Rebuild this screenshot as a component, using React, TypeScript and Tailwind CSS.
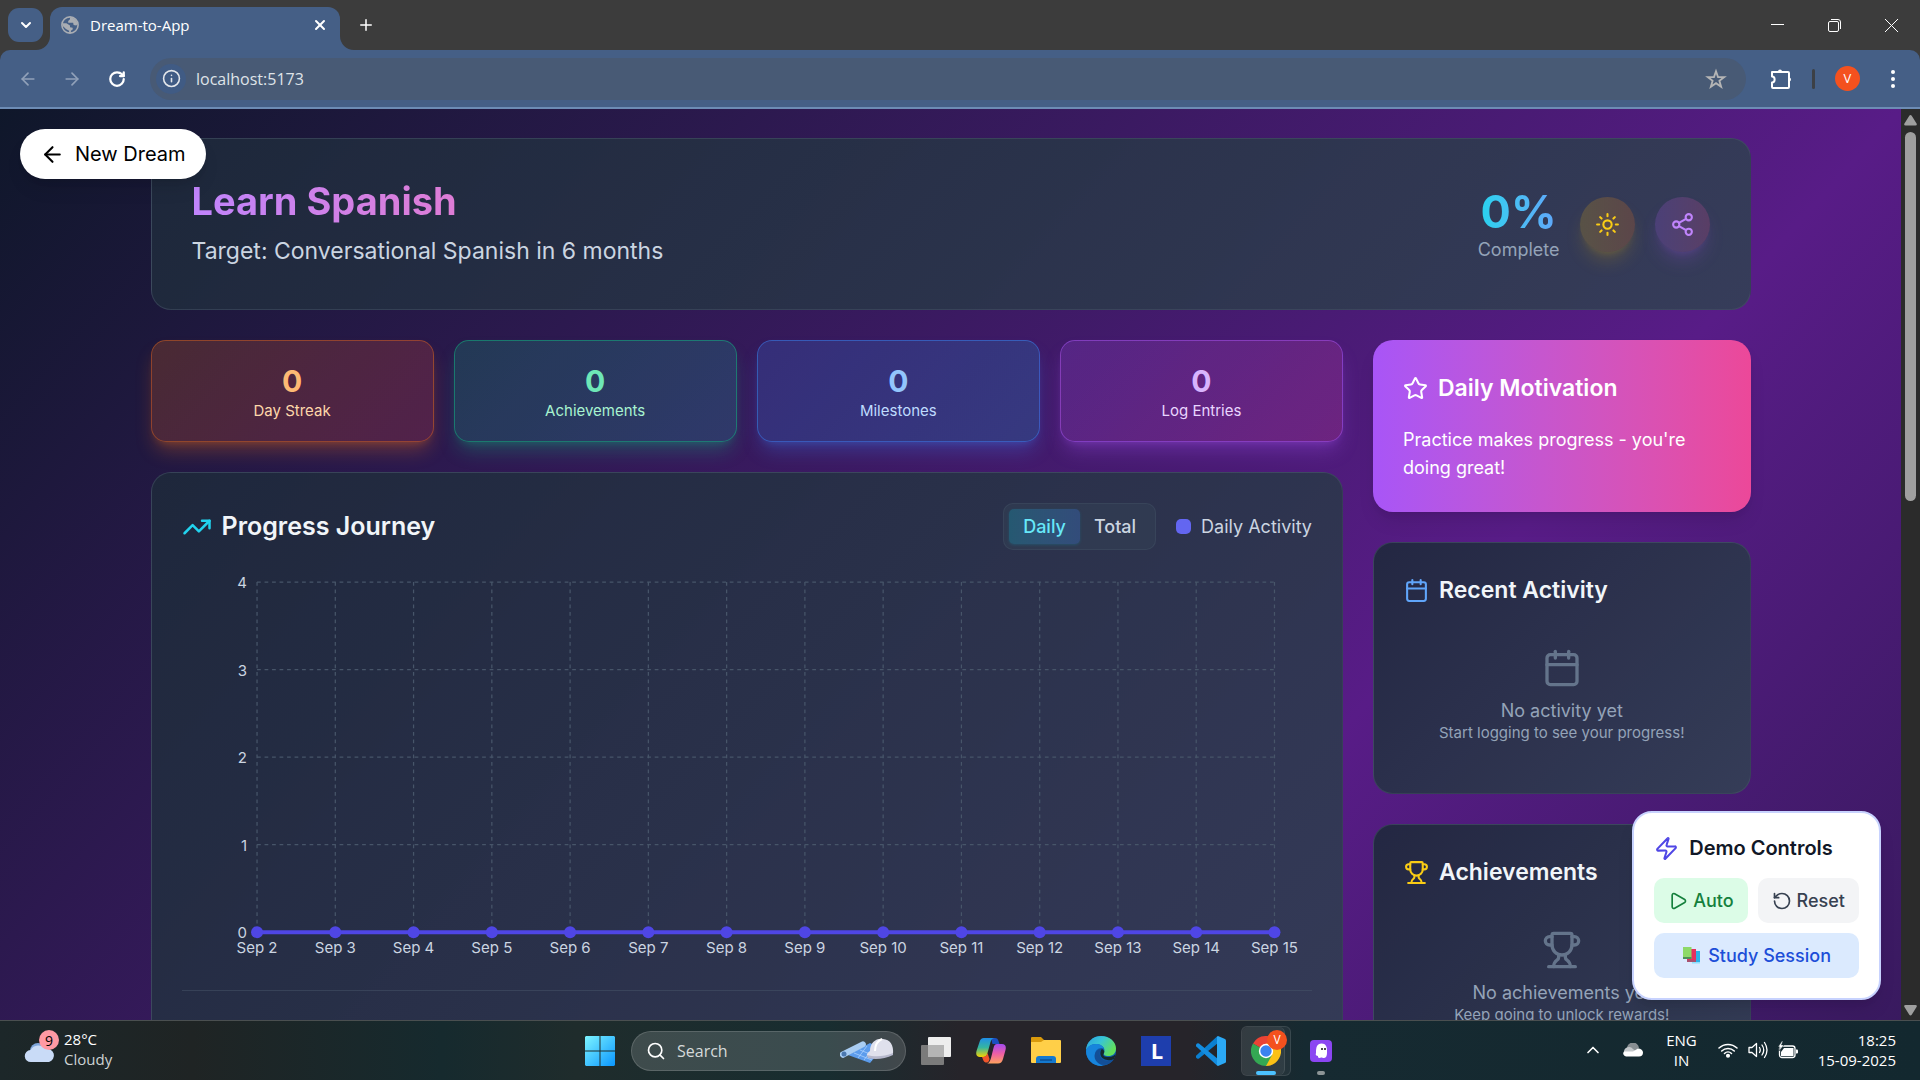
import React, { useState } from 'react';
import {
  ArrowLeft,
  ArrowRight,
  Calendar,
  ChevronDown,
  ChevronUp,
  Info,
  Play,
  Plus,
  RotateCcw,
  RotateCw,
  Search,
  Share2,
  Star,
  Sun,
  TrendingUp,
  Trophy,
  X,
  Zap,
} from 'lucide-react';

const stats = [
  {
    label: 'Day Streak',
    value: 0,
    card: 'bg-[linear-gradient(135deg,#f9731633,#ef444433)] border-[#f97316]/40 shadow-[0_12px_19px_-4px_#f973164d,0_5px_8px_-5px_#f973164d]',
    valueColor: 'text-[#fdba74]',
    labelColor: 'text-[#fed7aa]',
  },
  {
    label: 'Achievements',
    value: 0,
    card: 'bg-[linear-gradient(135deg,#10b98133,#14b8a633)] border-[#10b981]/50 shadow-[0_12px_19px_-4px_#10b9814d,0_5px_8px_-5px_#10b9814d]',
    valueColor: 'text-[#6ee7b7]',
    labelColor: 'text-[#a7f3d0]',
  },
  {
    label: 'Milestones',
    value: 0,
    card: 'bg-[linear-gradient(135deg,#3b82f633,#06b6d433)] border-[#3b82f6]/50 shadow-[0_12px_19px_-4px_#3b82f64d,0_5px_8px_-5px_#3b82f64d]',
    valueColor: 'text-[#93c5fd]',
    labelColor: 'text-[#bfdbfe]',
  },
  {
    label: 'Log Entries',
    value: 0,
    card: 'bg-[linear-gradient(135deg,#a855f733,#ec489933)] border-[#a855f7]/50 shadow-[0_12px_19px_-4px_#a855f74d,0_5px_8px_-5px_#a855f74d]',
    valueColor: 'text-[#d8b4fe]',
    labelColor: 'text-[#e9d5ff]',
  },
];

const days = Array.from({ length: 14 }, (_, i) => `Sep ${i + 2}`);

const cardStyle = 'bg-[linear-gradient(135deg,#1e293be6,#334155e6)] border border-[#475569]/50';

const TabStrip = () => (
  <div className="flex h-[50px] items-end bg-[#3c3c3c] pl-2 font-['Open_Sans',sans-serif]">
    <button aria-label="Search tabs" className="mb-2 flex h-[34px] w-[35px] items-center justify-center rounded-[11px] bg-[#455f86] text-white">
      <ChevronDown size={16} strokeWidth={3} />
    </button>
    <div className="relative ml-[7px] flex h-[43px] w-[290px] items-center rounded-t-xl bg-[#455f86] pr-3 pb-[7px] pl-[11px] text-white">
      <svg viewBox="0 0 14 14" className="absolute bottom-0 -left-[14px] h-[14px] w-[14px]" fill="#455f86">
        <path d="M14 0v14H0A14 14 0 0 0 14 0z" />
      </svg>
      <svg viewBox="0 0 14 14" className="absolute -right-[14px] bottom-0 h-[14px] w-[14px]" fill="#455f86">
        <path d="M0 0v14h14A14 14 0 0 1 0 0z" />
      </svg>
      <svg viewBox="0 0 20 20" className="h-[18px] w-[18px]">
        <circle cx="10" cy="10" r="9" fill="#455f86" stroke="#a9adb3" strokeWidth="1.800" />
        <path d="M1.500 8h4.500l4 2.500v2l3 .5v2l-2 1.500v2.500H9v-2.500l-3.500-2L2 11zM10 1.500v2L8 5.500v2h5.500l.5 2.500 3 .5 1.500-1.500C18 5 15 2 10 1.500z" fill="#a9adb3" />
      </svg>
      <span className="ml-[11px] flex-1 text-[15px] leading-5">Dream-to-App</span>
      <button aria-label="Close tab">
        <X size={16} strokeWidth={3} />
      </button>
    </div>
    <button aria-label="New tab" className="mb-[16px] ml-[17px] text-white">
      <Plus size={18} strokeWidth={2} />
    </button>
    <div className="mb-[18px] ml-auto flex items-center gap-11 pr-[22px] text-white">
      <button aria-label="Minimize">
        <svg width="13" height="13" viewBox="0 0 13 13" stroke="currentColor"><path d="M0 5.500h13" /></svg>
      </button>
      <button aria-label="Restore">
        <svg width="13" height="13" viewBox="0 0 13 13" fill="none" stroke="currentColor">
          <rect x=".5" y="2.500" width="10" height="10" rx="1.500" />
          <path d="M3 .5h7a2.500 2.500 0 0 1 2.500 2.500v7" />
        </svg>
      </button>
      <button aria-label="Close">
        <svg width="13" height="13" viewBox="0 0 13 13" stroke="currentColor"><path d="M0 0l13 13M13 0L0 13" /></svg>
      </button>
    </div>
  </div>
);

const Toolbar = () => (
  <div className="bg-[#3c3c3c] font-['Open_Sans',sans-serif]">
    <div className="flex h-[59px] items-center rounded-t-[10px] border-b-2 border-[#6d8cb5] bg-[#455f86] pl-[18px]">
      <button aria-label="Back" className="text-[#91a1b9]"><ArrowLeft size={20} /></button>
      <button aria-label="Forward" className="ml-[24px] text-[#91a1b9]"><ArrowRight size={20} /></button>
      <button aria-label="Reload" className="ml-[26px] text-white">
        <RotateCw size={18} strokeWidth={3} />
      </button>
      <div className="ml-[24px] flex h-[42px] flex-1 items-center rounded-full bg-[#485a75] pr-[19px] pl-[6px]">
        <button aria-label="View site information" className="flex h-[30px] w-[30px] items-center justify-center rounded-full bg-[#405b84] text-[#e3e6ea]">
          <Info size={19} />
        </button>
        <input
          aria-label="Address"
          defaultValue="localhost:5173"
          className="ml-[10px] min-w-0 flex-1 bg-transparent text-[16px] text-[#dfe3e8] outline-none"
        />
        <button aria-label="Bookmark this tab">
          <svg width="22" height="22" viewBox="0 0 24 24" fill="none" stroke="#b5b5b5" strokeWidth="2">
            <path d="M12 3.500l2.200 6.300 6.800.1-5.300 4.100 1.900 6.500-5.600-3.900-5.600 3.900 1.900-6.500L3 9.900l6.800-.1z" />
          </svg>
        </button>
      </div>
      <button aria-label="Extensions" className="ml-[24px]">
        <svg width="22" height="22" viewBox="0 0 22 22" fill="none" stroke="#fff" strokeWidth="2" strokeLinejoin="round">
          <path d="M2 4h16a1 1 0 0 1 1 1v14a1 1 0 0 1-1 1H3a1 1 0 0 1-1-1v-4.500c3.500 0 3.500-6 0-6z" />
          <path d="M8 3.500a2 2 0 0 1 4 0zM19 9.500a2 2 0 0 1 0 4z" fill="#fff" stroke="none" />
        </svg>
      </button>
      <span className="ml-5 h-5 w-[3px] rounded-full bg-[#3c4046]" />
      <button className="ml-5 flex h-[25px] w-[25px] items-center justify-center rounded-full bg-[#f4511e] text-[13px] text-white">V</button>
      <button aria-label="Menu" className="mr-[19px] ml-[25px]">
        <svg width="16" height="20" viewBox="0 0 16 20" fill="#fff">
          <circle cx="8" cy="3" r="2" />
          <circle cx="8" cy="10" r="2" />
          <circle cx="8" cy="17" r="2" />
        </svg>
      </button>
    </div>
  </div>
);

const DreamHeader = () => (
  <header className={`flex items-center justify-between rounded-[20px] p-10 ${cardStyle}`}>
    <div>
      <h1 className="bg-linear-to-r from-[#c084fc] to-[#f472b6] bg-clip-text text-[38px] leading-[45px] font-bold text-transparent">
        Learn Spanish
      </h1>
      <p className="mt-[10px] text-[23px] leading-[35px] text-[#cbd5e1]">Target: Conversational Spanish in 6 months</p>
    </div>
    <div className="flex items-center gap-5">
      <div className="text-center">
        <div className="bg-linear-to-r from-[#22d3ee] to-[#60a5fa] bg-clip-text text-[45px] leading-[50px] font-bold text-transparent">0%</div>
        <div className="text-[18px] leading-[25px] text-[#94a3b8]">Complete</div>
      </div>
      <button
        aria-label="Toggle theme"
        className="rounded-full bg-linear-to-r from-[#eab308]/20 to-[#f97316]/20 p-[15px] text-[#facc15] shadow-[0_12px_19px_-4px_#eab30833,0_5px_8px_-5px_#eab30833]"
      >
        <Sun size={25} />
      </button>
      <button
        aria-label="Share"
        className="rounded-full bg-linear-to-r from-[#a855f7]/20 to-[#ec4899]/20 p-[15px] text-[#c084fc] shadow-[0_12px_19px_-4px_#a855f733,0_5px_8px_-5px_#a855f733]"
      >
        <Share2 size={25} />
      </button>
    </div>
  </header>
);

const ProgressChart = () => {
  const left = 75;
  const right = 1092;
  const top = 7;
  const bottom = 357;
  const step = (right - left) / (days.length - 1);
  const xs = days.map((_, i) => left + step * i);

  return (
    <svg viewBox="0 0 1130 400" className="w-full" role="img" aria-label="Daily activity chart">
      <g stroke="#475569" strokeWidth="1.250" strokeDasharray="3.750 3.750">
        {[0, 1, 2, 3, 4].map((v) => {
          const y = bottom - ((bottom - top) / 4) * v;
          return <line key={v} x1={left} x2={right} y1={y} y2={y} />;
        })}
        {xs.map((x) => (
          <line key={x} x1={x} x2={x} y1={top} y2={bottom} />
        ))}
      </g>
      <line x1={left} x2={right} y1={bottom} y2={bottom} stroke="#4f46e5" strokeWidth="4" />
      {xs.map((x) => (
        <circle key={x} cx={x} cy={bottom} r="6" fill="#4f46e5" />
      ))}
      <g fill="#cbd5e1" fontSize="15">
        {[0, 1, 2, 3, 4].map((v) => (
          <text key={v} x={left - 10} y={bottom + 6 - ((bottom - top) / 4) * v} textAnchor="end">{v}</text>
        ))}
        {days.map((day, i) => (
          <text key={day} x={xs[i]} y={bottom + 21} textAnchor="middle">{day}</text>
        ))}
      </g>
    </svg>
  );
};

const ProgressJourney = () => {
  const [mode, setMode] = useState('Daily');

  return (
    <section className={`rounded-[20px] p-[30px] ${cardStyle}`}>
      <div className="mb-[25px] flex items-center justify-between">
        <h2 className="flex items-center gap-[10px] text-[25px] leading-[35px] font-semibold text-[#f1f5f9]">
          <TrendingUp size={30} className="text-[#22d3ee]" />
          Progress Journey
        </h2>
        <div className="flex items-center gap-5">
          <div className="flex rounded-[10px] border border-[#475569]/40 bg-[#334155]/50 p-[5px]">
            {['Daily', 'Total'].map((name) => (
              <button
                key={name}
                onClick={() => setMode(name)}
                className={`rounded-[5px] px-[14px] py-[5px] text-[18px] leading-[25px] font-medium ${
                  mode === name
                    ? 'bg-linear-to-r from-[#06b6d4]/25 to-[#3b82f6]/25 text-[#67e8f9] shadow-[0_1px_3px_#06b6d433]'
                    : 'text-[#cbd5e1]'
                }`}
              >
                {name}
              </button>
            ))}
          </div>
          <div className="flex items-center gap-[10px]">
            <span className="h-[15px] w-[15px] rounded-[5px] bg-[#6366f1]" />
            <span className="text-[18px] leading-[25px] text-[#cbd5e1]">{mode} Activity</span>
          </div>
        </div>
      </div>
      <ProgressChart />
      <div className="mt-[15px] h-[200px] border-t border-[#475569]/50" />
    </section>
  );
};

interface EmptyPanelProps {
  title: string;
  icon: React.ElementType;
  iconColor: string;
  message: string;
  hint: string;
}

const EmptyPanel: React.FC<EmptyPanelProps> = ({ title, icon: Icon, iconColor, message, hint }) => (
  <section className={`rounded-[20px] p-[30px] ${cardStyle}`}>
    <h3 className="mb-5 flex items-center gap-[10px] text-[23px] leading-[35px] font-semibold text-[#f1f5f9]">
      <Icon size={25} className={iconColor} />
      {title}
    </h3>
    <div className="flex flex-col items-center py-5">
      <Icon size={40} className="mb-[10px] text-[#64748b]" />
      <p className="text-[18px] leading-[25px] text-[#94a3b8]">{message}</p>
      <p className="text-[15px] leading-5 text-[#94a3b8]">{hint}</p>
    </div>
  </section>
);

const DemoControls = () => (
  <div className="absolute right-5 bottom-5 rounded-[20px] border-2 border-[#c7d2fe] bg-white p-5 shadow-[0_12px_19px_-4px_#0000001a,0_5px_8px_-5px_#0000001a]">
    <h4 className="mb-[15px] flex items-center gap-[10px] text-[20px] leading-[30px] font-semibold text-[#111827]">
      <Zap size={25} className="text-[#4f46e5]" />
      Demo Controls
    </h4>
    <div className="flex flex-col gap-[10px] text-[18px] leading-[25px] font-medium">
      <div className="flex gap-[10px]">
        <button className="flex items-center gap-[5px] rounded-[10px] bg-[#dcfce7] px-[14px] py-[10px] text-[#15803d]">
          <Play size={20} />
          Auto
        </button>
        <button className="flex items-center gap-[5px] rounded-[10px] bg-[#f3f4f6] px-[14px] py-[10px] text-[#374151]">
          <RotateCcw size={20} />
          Reset
        </button>
      </div>
      <button className="flex items-center justify-center gap-[7px] rounded-[10px] bg-[#dbeafe] px-[14px] py-[10px] text-[#1d4ed8]">
        <svg width="19" height="19" viewBox="0 0 19 19">
          <path d="M10 5h8v12h-8z" fill="#2cb1e8" />
          <path d="M10 16h8v1.500h-8z" fill="#8fe0ff" />
          <path d="M5 3h9v13H5z" fill="#e5305f" />
          <path d="M5 14h9v2H5z" fill="#a8516f" />
          <path d="M1 1h8.500v12H1z" fill="#8ed968" />
          <path d="M1 11h8.500v2H1z" fill="#4f8f5a" />
        </svg>
        Study Session
      </button>
    </div>
  </div>
);

const Dashboard = () => (
  <main className="relative min-h-0 min-w-0 flex-1 overflow-hidden bg-[linear-gradient(to_bottom_right,#0f172a,#581c87,#0f172a)] bg-[length:100%_232%] font-['Inter',sans-serif]">
    <div className="mx-auto flex max-w-[1600px] flex-col gap-[30px] pt-[29px]">
      <DreamHeader />
      <div className="grid grid-cols-4 items-start gap-[30px]">
        <div className="col-span-3 flex flex-col gap-[30px]">
          <div className="grid grid-cols-4 gap-5">
            {stats.map((stat) => (
              <div key={stat.label} className={`rounded-[15px] border p-5 text-center ${stat.card}`}>
                <div className={`text-[30px] leading-10 font-bold ${stat.valueColor}`}>{stat.value}</div>
                <div className={`text-[15px] leading-5 ${stat.labelColor}`}>{stat.label}</div>
              </div>
            ))}
          </div>
          <ProgressJourney />
        </div>
        <aside className="flex flex-col gap-[30px]">
          <section className="rounded-[20px] bg-linear-to-r from-[#a855f7] to-[#ec4899] p-[30px] text-white shadow-[0_12px_19px_-4px_#0000001a,0_5px_8px_-5px_#0000001a]">
            <h3 className="mb-5 flex items-center gap-[10px] text-[23px] leading-[36px] font-semibold">
              <Star size={25} />
              Daily Motivation
            </h3>
            <p className="text-[18px] leading-7">Practice makes progress - you're doing great!</p>
          </section>
          <EmptyPanel
            title="Recent Activity"
            icon={Calendar}
            iconColor="text-[#60a5fa]"
            message="No activity yet"
            hint="Start logging to see your progress!"
          />
          <EmptyPanel
            title="Achievements"
            icon={Trophy}
            iconColor="text-[#facc15]"
            message="No achievements yet"
            hint="Keep going to unlock rewards!"
          />
        </aside>
      </div>
    </div>
    <button className="absolute top-5 left-5 flex items-center gap-[10px] rounded-full bg-white px-5 py-[10px] text-[20px] leading-[30px] text-black shadow-[0_12px_19px_-4px_#0000001a,0_5px_8px_-5px_#0000001a]">
      <ArrowLeft size={25} />
      New Dream
    </button>
    <DemoControls />
  </main>
);

const Scrollbar = () => (
  <div className="flex w-[19px] flex-col items-center bg-[#2b2b2b] pt-[6px] pb-[4px]">
    <svg width="13" height="11" viewBox="0 0 13 11" fill="#9f9f9f"><path d="M6.500 0q.7 0 1.200.8l5 8q.5 1.700-1.200 1.700h-10q-1.700 0-1.200-1.700l5-8Q5.800 0 6.500 0z" /></svg>
    <div className="mt-[6px] h-[41%] w-[11px] rounded-full bg-[#9f9f9f]" />
    <svg width="13" height="11" viewBox="0 0 13 11" fill="#9f9f9f" className="mt-auto"><path d="M6.500 10.500q-.7 0-1.200-.8l-5-8Q-.2 0 1.500 0h10q1.700 0 1.200 1.700l-5 8q-.5.8-1.200.8z" /></svg>
  </div>
);

const Taskbar = () => (
  <footer className="relative flex h-[60px] items-center justify-between border-t border-[#4a4f50] bg-[linear-gradient(to_right,#1c2729_0%,#1f2424_10%,#162a2e_23%,#1f2c2c_30%,#182d30_43%,#26242a_50%,#26242a_62%,#162a31_68%,#13282f_100%)] font-['Open_Sans',sans-serif] text-white">
    <button className="flex items-center pb-[3px] pl-6 text-left">
      <span className="relative">
        <svg width="33" height="30" viewBox="0 0 33 30">
          <circle cx="14" cy="17" r="8" fill="#7fa6dc" />
          <path d="M7 28a6 6 0 0 1-.5-12 9 9 0 0 1 15-1A6.500 6.500 0 0 1 25 28z" fill="#c9dbf7" />
        </svg>
        <span className="absolute -top-1 -right-[2px] flex h-5 w-5 items-center justify-center rounded-full bg-[#ff99a4] text-[14px] text-black">9</span>
      </span>
      <span className="ml-[7px] text-[15px] leading-5">
        <span className="block">28°C</span>
        <span className="block text-[#cdd2d3]">Cloudy</span>
      </span>
    </button>

    <nav className="absolute inset-y-0 left-[585px] flex items-center">
      <button aria-label="Start">
        <svg width="30" height="30" viewBox="0 0 30 30">
          <defs>
            <linearGradient id="win" x1="0" y1="0" x2="1" y2="1">
              <stop offset="0" stopColor="#7df4ff" />
              <stop offset="1" stopColor="#0a96ff" />
            </linearGradient>
          </defs>
          <path d="M1 0h13.500v14.500H0V1zM15.500 0H29l1 1v13.500H15.500zM0 15.500h14.500V30H1l-1-1zM15.500 15.500H30V29l-1 1H15.500z" fill="url(#win)" />
        </svg>
      </button>
      <label className="ml-[16px] flex h-10 w-[275px] items-center rounded-full border border-white/15 bg-white/15 pr-[11px] pl-[14px]">
        <Search size={20} strokeWidth={2} />
        <input placeholder="Search" className="ml-[11px] w-[140px] bg-transparent text-[16px] outline-none placeholder:text-[#d5dada]" />
        <svg width="54" height="26" viewBox="0 0 54 26" className="ml-auto">
          <path d="M8 17L30 5l12 6-12 14z" fill="#5c9cec" />
          <path d="M14 15l18 7M20 12l15 6M27 8L18 20M34 9L24 22" stroke="#a9d0ff" strokeWidth=".8" />
          <path d="M1 14L22 3.500a3 3 0 0 1 3 5L5 19a3 3 0 0 1-4-5z" fill="#a9cdf3" />
          <circle cx="4" cy="16" r="2.500" fill="#4b78b0" />
          <path d="M30 13C30 5 36 0 43 1c7 .5 11 6 10 15-7 3-16 4-24 3-3-1-3-3 1-6z" fill="#dfe0ec" />
          <path d="M35 13c0-6 2-10 7-12" fill="none" stroke="#fff" strokeWidth="2" />
          <path d="M27 17c7 2 17 2 26-2v2c-8 4-18 5-25 3z" fill="#b6b8cc" />
        </svg>
      </label>
      <button aria-label="Task view" className="ml-[15px]">
        <svg width="30" height="28" viewBox="0 0 30 28">
          <rect x="7" y="0" width="23" height="20" rx="1" fill="#eee" />
          <rect x="0" y="8" width="23" height="20" rx="1" fill="#7b7b7b" />
          <rect x="7" y="8" width="16" height="12" fill="#b5b5b5" />
        </svg>
      </button>
      <button aria-label="Copilot" className="ml-[25px]">
        <svg width="30" height="28" viewBox="0 0 30 28">
          <defs>
            <linearGradient id="copA" x1="0" y1="0" x2="0" y2="1">
              <stop offset="0" stopColor="#1f8ee8" />
              <stop offset=".5" stopColor="#35b6a0" />
              <stop offset="1" stopColor="#f5d300" />
            </linearGradient>
            <linearGradient id="copB" x1="0" y1="0" x2="0" y2="1">
              <stop offset="0" stopColor="#a34bf0" />
              <stop offset=".5" stopColor="#ee5fa5" />
              <stop offset="1" stopColor="#ffa25e" />
            </linearGradient>
          </defs>
          <path d="M15 1h4c2 0 3 1 3.500 3l1 3h-7z" fill="#1b4fc0" />
          <path d="M8 1h11c-3 0-4 2-5 6l-2.500 9c-.8 3-2 4-4 4H4c-3 0-4.500-2-3.500-6L3.500 5C4.300 2.500 5.500 1 8 1z" fill="url(#copA)" />
          <path d="M6 20c3 0 4.500-1 5.500-4l2 6c-.5 3-2 4-4 3.500C7.500 25 7 22.500 6 20z" fill="#f0552b" />
          <path d="M21 7h5c3 0 4.500 2 3.500 6L27 22c-.8 3-2.500 4.500-5 4.500H10c3 0 4-2 5-5.500l2.500-10C18.300 8 19 7 21 7z" fill="url(#copB)" />
        </svg>
      </button>
      <button aria-label="File Explorer" className="ml-[25px]">
        <svg width="30" height="27" viewBox="0 0 30 27">
          <path d="M0 1q0-1 1-1h9l3 3v3H0z" fill="#d99a0c" />
          <path d="M0 5l10 0 3-2h16q1 0 1 1v21q0 1-1 1H1q-1 0-1-1z" fill="#ffcf48" />
          <path d="M5 26v-4q0-3 3-3h14q3 0 3 3v4z" fill="#1479cf" />
          <path d="M9 23h12" stroke="#0b4f94" strokeWidth="1.500" />
        </svg>
      </button>
      <button aria-label="Edge" className="ml-[25px]">
        <svg width="30" height="30" viewBox="0 0 30 30">
          <defs>
            <linearGradient id="edge" x1="0" y1="0" x2="1" y2=".5">
              <stop offset="0" stopColor="#2a9fe0" />
              <stop offset=".5" stopColor="#38c5d5" />
              <stop offset="1" stopColor="#62e05c" />
            </linearGradient>
          </defs>
          <circle cx="15" cy="15" r="15" fill="#0f5fb0" />
          <path d="M0 15C0 6 7 0 15 0c9 0 15 6 15 12.500 0 5-3.500 7.500-7.500 7.500-4 0-5.500-1.500-4.500-3.500 2-4-2-8.500-8-8.500C5 8 1 11 0 15z" fill="url(#edge)" />
          <path d="M0 15C1 11 4.500 8 10 8c4 0 7 2 8 4.500-5-2-9 1.500-9 6.500 0 5 3.500 9.500 8.500 10.800C8 31 0 24 0 15z" fill="#1785dc" />
          <path d="M17 12.500c-3 1-4 4-3 7.500s6 6.500 14 3c-3 5-10 7.500-15 4.500-5-3-6-9-2-13 2-1.500 4-2 6-2z" fill="#134f97" />
          <path d="M16 13c2.500 1 3 3 1.500 5-.8 2 1 3 5 3 4 0 6-1.500 7-3-.3 2-.7 3.500-1.500 5-5 2.500-12 1-13.500-4-.5-2.500 0-5 1.500-6z" fill="#14292f" />
        </svg>
      </button>
      <button className="ml-[25px] flex h-[30px] w-[30px] items-center justify-center bg-[#1e3ead] pl-[2px] text-[22px] font-bold text-white">L</button>
      <button aria-label="Visual Studio Code" className="ml-[25px]">
        <svg width="30" height="30" viewBox="0 0 30 30">
          <path d="M22 7L3 22.500q-1 .7-2 0l-1-1q-.7-1 .3-2L21 .5z" fill="#0a7fd0" />
          <path d="M22 23L3 7.500q-1-.7-2 0l-1 1q-.7 1 .3 2L21 29.500z" fill="#148de0" />
          <path d="M22 0l7 3q1 .5 1 1.500v21q0 1-1 1.500l-7 3q-1 0-1-1V1q0-1 1-1z" fill="#2ba9f5" />
        </svg>
      </button>
      <button aria-label="Chrome" className="relative ml-[15px] flex h-[50px] w-[50px] items-center rounded-[6px] border border-white/10 bg-white/5 pl-[9px]">
        <span className="absolute inset-y-0 left-0 w-[43px] rounded-[6px] border-r border-white/10 bg-white/5" />
        <svg width="30" height="30" viewBox="0 0 30 30" className="relative">
          <path d="M15 15L2 7.500A15 15 0 0 1 28 7.500z" fill="#ea4335" />
          <path d="M15 15V7.500h13A15 15 0 0 1 15 30z" fill="#fbc116" />
          <path d="M15 15l6.200 3.700L15 30A15 15 0 0 1 2 7.500z" fill="#34a853" />
          <circle cx="15" cy="15" r="7.200" fill="#fff" />
          <circle cx="15" cy="15" r="5.700" fill="#3b82f0" />
        </svg>
        <span className="absolute top-[3px] right-[3px] flex h-5 w-5 items-center justify-center rounded-full bg-[#f4511e] text-[12px]">V</span>
        <span className="absolute bottom-0 left-[14px] h-1 w-5 rounded-full bg-[#4cc2ff]" />
      </button>
      <button aria-label="Ghost app" className="relative ml-[19px]">
        <svg width="22" height="22" viewBox="0 0 22 22">
          <rect width="22" height="22" rx="4" fill="#8b46f2" />
          <path d="M6 13c0-6 1-9.500 5.500-9.500S17 7 17 10v3c0 3-1 5-3.500 5-1 0-1.500-.8-2.200-.5-2 1-3.800.5-3.300-1.500C6.500 16 5 15 6 13z" fill="#fff" />
          <circle cx="12" cy="9" r="1" fill="#111" />
          <circle cx="15" cy="9" r="1" fill="#111" />
        </svg>
        <span className="absolute -bottom-[13px] left-[7px] h-1 w-2 rounded-full bg-[#8d9597]" />
      </button>
    </nav>

    <div className="flex items-center pr-6 pb-[2px] text-[15px] leading-5">
      <button aria-label="Show hidden icons"><ChevronUp size={20} strokeWidth={2} /></button>
      <svg width="20" height="14" viewBox="0 0 20 14" className="ml-[20px]">
        <path d="M4 6a6 6 0 0 1 12-1l-6 5z" fill="#888e92" />
        <path d="M1 9a5 5 0 0 1 9-3l6 5H2z" fill="#c3c7ca" />
        <path d="M3 13.500a3 3 0 0 1-2-5l9 0 5-3c3 0 5 2 5 4a4 4 0 0 1-4 4z" fill="#fff" />
      </svg>
      <button className="ml-[23px] text-center">
        <span className="block">ENG</span>
        <span className="block">IN</span>
      </button>
      <button aria-label="Network, sound and battery" className="ml-[21px] flex items-center gap-[10px]">
        <svg width="20" height="16" viewBox="0 0 20 16" fill="none" stroke="#fff" strokeWidth="1.500" strokeLinecap="round">
          <path d="M1 6a13 13 0 0 1 18 0M3.700 9a9 9 0 0 1 12.600 0M6.500 11.500a5 5 0 0 1 7 0" />
          <circle cx="10" cy="13.800" r="1.300" fill="#fff" />
        </svg>
        <svg width="20" height="18" viewBox="0 0 20 18" fill="none" stroke="#fff" strokeWidth="1.300" strokeLinecap="round" strokeLinejoin="round">
          <path d="M1 6.500h3l4.500-4v13L4 11.500H1z" />
          <path d="M11.500 6.500q1.500 2.500 0 5M14 4q3.500 5 0 10M16.500 1.500q5 7.500 0 15" />
        </svg>
        <svg width="20" height="18" viewBox="0 0 20 18">
          <rect x="1.500" y="5" width="15.500" height="11.500" rx="2.500" fill="none" stroke="#fff" strokeWidth="1.300" />
          <path d="M6 7h9.500v8H3v-4z" fill="#fff" />
          <path d="M18 8.500h1q1 0 1 1v2q0 1-1 1h-1z" fill="#fff" />
          <path d="M4 0L0 6h2L1 10l5-6H3.500L5 0z" fill="#fff" stroke="#13282f" strokeWidth=".5" />
        </svg>
      </button>
      <button className="ml-[20px] text-right">
        <time className="block">18:25</time>
        <time className="block">15-09-2025</time>
      </button>
    </div>
  </footer>
);

export default function App() {
  return (
    <div className="flex h-screen flex-col overflow-hidden">
      <TabStrip />
      <Toolbar />
      <div className="flex min-h-0 flex-1">
        <Dashboard />
        <Scrollbar />
      </div>
      <Taskbar />
    </div>
  );
}
